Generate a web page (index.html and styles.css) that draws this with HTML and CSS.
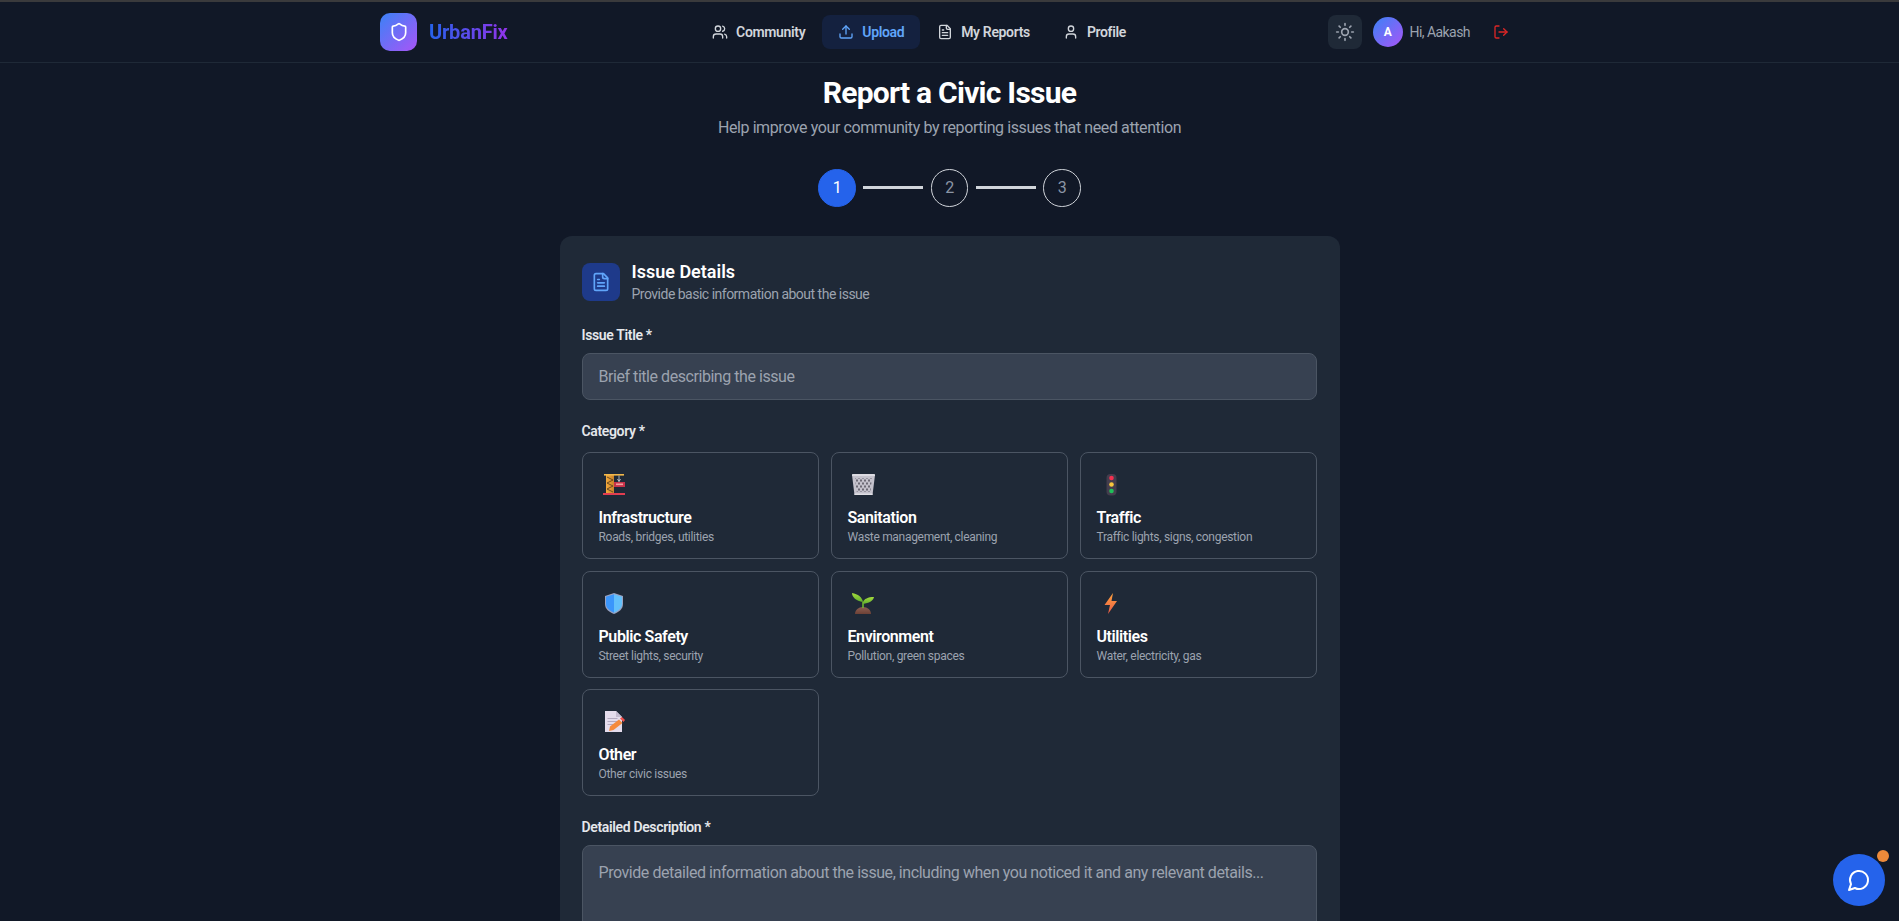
FILE: index.html
```html
<!DOCTYPE html>
<html lang="en">
<head>
  <meta charset="UTF-8" />
  <meta name="viewport" content="width=device-width, initial-scale=1.0" />
  <title>Report a Civic Issue - UrbanFix</title>
  <link rel="stylesheet" href="styles.css">
</head>
<body>
  <svg class="sprite" aria-hidden="true">
    <defs>
      <linearGradient id="crane-metal" x1="0" y1="0" x2="1" y2="0"><stop offset="0" stop-color="#f2a93b"/><stop offset="1" stop-color="#c9822a"/></linearGradient>
      <linearGradient id="bolt-fill" x1="0" y1="0" x2="0" y2="1"><stop offset="0" stop-color="#ffa33d"/><stop offset="1" stop-color="#ea5a47"/></linearGradient>
      <linearGradient id="sprout-leaf" x1="0" y1="0" x2="0" y2="1"><stop offset="0" stop-color="#a6dc3c"/><stop offset="1" stop-color="#5fae2e"/></linearGradient>
      <linearGradient id="soil" x1="0" y1="0" x2="0" y2="1"><stop offset="0" stop-color="#8d5f52"/><stop offset="1" stop-color="#6d4136"/></linearGradient>
      <pattern id="bin-mesh" width="4" height="6" patternUnits="userSpaceOnUse">
        <ellipse cx="1" cy="1.500" rx=".8" ry="1.300" fill="#55525e"/>
        <ellipse cx="3" cy="4.500" rx=".8" ry="1.300" fill="#55525e"/>
      </pattern>
    </defs>
    <symbol id="i-shield" viewBox="0 0 24 24"><path d="M20 13c0 5-3.5 7.5-7.66 8.95a1 1 0 0 1-.67-.01C7.5 20.5 4 18 4 13V6a1 1 0 0 1 1-1c2 0 4.5-1.2 6.24-2.72a1.17 1.17 0 0 1 1.52 0C14.51 3.81 17 5 19 5a1 1 0 0 1 1 1z"/></symbol>
    <symbol id="i-users" viewBox="0 0 24 24"><path d="M16 21v-2a4 4 0 0 0-4-4H6a4 4 0 0 0-4 4v2"/><circle cx="9" cy="7" r="4"/><path d="M22 21v-2a4 4 0 0 0-3-3.87"/><path d="M16 3.13a4 4 0 0 1 0 7.75"/></symbol>
    <symbol id="i-upload" viewBox="0 0 24 24"><path d="M21 15v4a2 2 0 0 1-2 2H5a2 2 0 0 1-2-2v-4"/><polyline points="17 8 12 3 7 8"/><line x1="12" y1="3" x2="12" y2="15"/></symbol>
    <symbol id="i-file" viewBox="0 0 24 24"><path d="M15 2H6a2 2 0 0 0-2 2v16a2 2 0 0 0 2 2h12a2 2 0 0 0 2-2V7Z"/><path d="M14 2v4a2 2 0 0 0 2 2h4"/><path d="M10 9H8"/><path d="M16 13H8"/><path d="M16 17H8"/></symbol>
    <symbol id="i-user" viewBox="0 0 24 24"><path d="M19 21v-2a4 4 0 0 0-4-4H9a4 4 0 0 0-4 4v2"/><circle cx="12" cy="7" r="4"/></symbol>
    <symbol id="i-sun" viewBox="0 0 24 24"><circle cx="12" cy="12" r="4"/><path d="M12 2v2"/><path d="M12 20v2"/><path d="m4.93 4.93 1.41 1.41"/><path d="m17.66 17.66 1.41 1.41"/><path d="M2 12h2"/><path d="M20 12h2"/><path d="m6.34 17.66-1.41 1.41"/><path d="m19.07 4.93-1.41 1.41"/></symbol>
    <symbol id="i-logout" viewBox="0 0 24 24"><path d="M9 21H5a2 2 0 0 1-2-2V5a2 2 0 0 1 2-2h4"/><polyline points="16 17 21 12 16 7"/><line x1="21" y1="12" x2="9" y2="12"/></symbol>
    <symbol id="i-chat" viewBox="0 0 24 24"><path d="M7.9 20A9 9 0 1 0 4 16.1L2 22Z"/></symbol>
  </svg>

  <header class="topbar">
    <div class="topbar-inner">
      <a class="brand" href="#">
        <span class="brand-logo"><svg class="icon icon-20"><use href="#i-shield"/></svg></span>
        <span class="brand-name">UrbanFix</span>
      </a>
      <nav class="nav-links">
        <a class="nav-link" href="#"><svg class="icon"><use href="#i-users"/></svg>Community</a>
        <a class="nav-link active" href="#"><svg class="icon"><use href="#i-upload"/></svg>Upload</a>
        <a class="nav-link" href="#"><svg class="icon"><use href="#i-file"/></svg>My Reports</a>
        <a class="nav-link" href="#"><svg class="icon"><use href="#i-user"/></svg>Profile</a>
      </nav>
      <div class="user-area">
        <button class="theme-btn"><svg class="icon icon-20"><use href="#i-sun"/></svg></button>
        <span class="avatar">A</span>
        <span class="greeting">Hi, Aakash</span>
        <button class="logout-btn"><svg class="icon"><use href="#i-logout"/></svg></button>
      </div>
    </div>
  </header>

  <main class="page">
    <h1 class="page-title">Report a Civic Issue</h1>
    <p class="page-sub">Help improve your community by reporting issues that need attention</p>

    <div class="steps">
      <div class="step current">1</div>
      <div class="step-line"></div>
      <div class="step">2</div>
      <div class="step-line"></div>
      <div class="step">3</div>
    </div>

    <form class="card">
      <div class="card-head">
        <span class="card-icon"><svg class="icon icon-20"><use href="#i-file"/></svg></span>
        <div>
          <h2 class="card-title">Issue Details</h2>
          <p class="card-sub">Provide basic information about the issue</p>
        </div>
      </div>

      <label class="field-label" for="issueTitle">Issue Title *</label>
      <input class="text-input" id="issueTitle" type="text" placeholder="Brief title describing the issue">

      <div class="field-label spaced cat-label">Category *</div>
      <div class="cat-grid">
        <button type="button" class="cat-card">
          <svg class="emoji" viewBox="0 0 30 24">
            <rect x="7" y="2" width="8" height="19" fill="url(#crane-metal)"/>
            <path d="M8 4l6 3-6 3 6 3-6 3 6 3" fill="none" stroke="#6b4a1f" stroke-width="1"/>
            <rect x="5" y="1" width="20" height="1.600" fill="#f2b84b"/>
            <path d="M20 2.500v6" stroke="#aab0b8" stroke-width="1"/>
            <path d="M18.500 6l1.500 2.500L21.500 6" fill="none" stroke="#d8d8de" stroke-width=".8"/>
            <rect x="15" y="9" width="11" height="5" fill="#c8324a"/>
            <rect x="17" y="10.500" width="7" height="1.600" fill="#f0a0a0"/>
            <rect x="4" y="20" width="22" height="2" fill="#e23d50"/>
          </svg>
          <span class="cat-name">Infrastructure</span>
          <span class="cat-desc">Roads, bridges, utilities</span>
        </button>
        <button type="button" class="cat-card">
          <svg class="emoji" viewBox="0 0 30 24">
            <path d="M4 2h23l-2.500 20H6.500z" fill="#c4c2cc"/>
            <path d="M7 5h17l-1.600 14H8.600z" fill="url(#bin-mesh)"/>
            <rect x="4" y="1" width="23" height="2" rx=".6" fill="#dcdbe2"/>
            <rect x="6.500" y="20.500" width="18" height="1.500" fill="#e0dfe5"/>
          </svg>
          <span class="cat-name">Sanitation</span>
          <span class="cat-desc">Waste management, cleaning</span>
        </button>
        <button type="button" class="cat-card">
          <svg class="emoji" viewBox="0 0 30 24">
            <rect x="9.500" y="1" width="10" height="21.500" rx="4" fill="#433d4d"/>
            <circle cx="14.500" cy="5" r="2.300" fill="#f4304f"/>
            <circle cx="14.500" cy="11.500" r="2.300" fill="#f8c63d"/>
            <circle cx="14.500" cy="18" r="2.300" fill="#1fbf5a"/>
          </svg>
          <span class="cat-name">Traffic</span>
          <span class="cat-desc">Traffic lights, signs, congestion</span>
        </button>
        <button type="button" class="cat-card">
          <svg class="emoji" viewBox="0 0 30 24">
            <path d="M15 1l9 3v8c0 5-4 8-9 10-5-2-9-5-9-10V4z" fill="#9aa3c2"/>
            <path d="M15 2.300V20.700c-4-1.800-8-4.400-8-8.700V4.700z" fill="#3b96fb"/>
            <path d="M15 2.300l8 2.400V12c0 4.300-4 6.900-8 8.700z" fill="#63c0fb"/>
          </svg>
          <span class="cat-name">Public Safety</span>
          <span class="cat-desc">Street lights, security</span>
        </button>
        <button type="button" class="cat-card">
          <svg class="emoji" viewBox="0 0 30 24">
            <path d="M7 22c0-4 3.500-7 8-7s8 3 8 7z" fill="url(#soil)"/>
            <path d="M14.200 16V10h1.600v6z" fill="#6fb62f"/>
            <path d="M15 10C14 5 10 2 4 1c0 4 4 8 11 9z" fill="url(#sprout-leaf)"/>
            <path d="M15 10c1-3 5-5 11-5-1 4-5 6-11 7z" fill="url(#sprout-leaf)"/>
          </svg>
          <span class="cat-name">Environment</span>
          <span class="cat-desc">Pollution, green spaces</span>
        </button>
        <button type="button" class="cat-card">
          <svg class="emoji" viewBox="0 0 30 24">
            <path d="M16 1L7.500 13H13l-2 9 9-13h-5.500z" fill="url(#bolt-fill)"/>
          </svg>
          <span class="cat-name">Utilities</span>
          <span class="cat-desc">Water, electricity, gas</span>
        </button>
        <button type="button" class="cat-card">
          <svg class="emoji" viewBox="0 0 30 24">
            <path d="M6 1h11l6 6v15H6z" fill="#e4dcec"/>
            <path d="M17 1l6 6h-6z" fill="#c4bbd0"/>
            <path d="M8.500 8.500h10M8.500 11.500h10M8.500 14.500h6" stroke="#b3a9bf" stroke-width="1"/>
            <path d="M10 21l1-4.500 9-7 3.500 3.500-9 7z" fill="#f58a3c"/>
            <path d="M21 8.500l2-1.500 3 3-1.500 2z" fill="#f2504b"/>
          </svg>
          <span class="cat-name">Other</span>
          <span class="cat-desc">Other civic issues</span>
        </button>
      </div>

      <label class="field-label spaced" for="issueDesc">Detailed Description *</label>
      <textarea class="text-input text-area" id="issueDesc" placeholder="Provide detailed information about the issue, including when you noticed it and any relevant details..."></textarea>
    </form>
  </main>

  <button class="chat-fab">
    <svg class="icon icon-24"><use href="#i-chat"/></svg>
    <span class="chat-dot"></span>
  </button>
</body>
</html>
```

FILE: styles.css
```css
* {
  box-sizing: border-box;
  letter-spacing: -0.025em;
}

html, body {
  height: 100%;
  overflow: hidden;
}

body {
  margin: 0;
  background-color: #111827;
  color: #fff;
  font-family: Roboto, 'Noto Sans', sans-serif;
  border-top: 2px solid #3a3a3c;
}

a {
  color: inherit;
  text-decoration: none;
}

button {
  font-family: inherit;
  border: none;
  background: none;
  color: inherit;
  cursor: pointer;
}

.sprite {
  position: absolute;
  width: 0;
  height: 0;
}

.icon {
  width: 16px;
  height: 16px;
  flex-shrink: 0;
  fill: none;
  stroke: currentColor;
  stroke-width: 2;
  stroke-linecap: round;
  stroke-linejoin: round;
}

.icon-20 { width: 20px; height: 20px; }
.icon-24 { width: 24px; height: 24px; }

/* top bar */
.topbar {
  height: 61px;
  padding-right: 2px;
  border-bottom: 1px solid #1f2937;
}

.topbar-inner {
  width: 1137px;
  height: 100%;
  margin: 0 auto;
  display: flex;
  align-items: center;
  justify-content: space-between;
}

.brand {
  display: flex;
  align-items: center;
  gap: 12px;
}

.brand-logo {
  width: 37px;
  height: 38px;
  border-radius: 10px;
  background: linear-gradient(135deg, #3b82f6, #a855f7);
  display: flex;
  align-items: center;
  justify-content: center;
}

.brand-name {
  font-size: 20px;
  font-weight: 700;
  letter-spacing: -0.01em;
  background: linear-gradient(90deg, #2563eb, #9333ea);
  -webkit-background-clip: text;
  background-clip: text;
  color: transparent;
}

.nav-links {
  display: flex;
  gap: 1px;
  margin-left: 3px;
}

.nav-link {
  display: flex;
  align-items: center;
  gap: 8px;
  height: 34px;
  padding: 0 16px;
  border-radius: 8px;
  font-size: 14px;
  font-weight: 600;
  color: #d1d5db;
}

.nav-link.active {
  background-color: #14213f;
  color: #60a5fa;
}

.user-area {
  display: flex;
  align-items: center;
}

.theme-btn {
  width: 34px;
  height: 34px;
  padding: 0;
  border-radius: 8px;
  background-color: #1f2937;
  color: #9ca3af;
  display: flex;
  align-items: center;
  justify-content: center;
  margin-right: 11px;
}

.avatar {
  width: 30px;
  height: 30px;
  border-radius: 50%;
  background: linear-gradient(135deg, #3b82f6, #a855f7);
  display: flex;
  align-items: center;
  justify-content: center;
  font-size: 12px;
  font-weight: 700;
  margin-right: 7px;
}

.greeting {
  font-size: 14px;
  letter-spacing: -0.04em;
  color: #9ca3af;
  margin-right: 15px;
}

.logout-btn {
  padding: 8px;
  color: #dc2626;
  display: flex;
}

/* page head */
.page {
  text-align: center;
}

.page-title {
  margin: 0;
  padding-top: 12px;
  font-size: 30px;
  line-height: 36px;
  font-weight: 700;
}

.page-sub {
  margin: 5px 0 0;
  font-size: 16px;
  line-height: 24px;
  color: #9ca3af;
}

.steps {
  display: flex;
  align-items: center;
  justify-content: center;
  margin-top: 29px;
}

.step {
  width: 37.5px;
  height: 37.5px;
  border: 1px solid #d1d5db;
  border-radius: 50%;
  display: flex;
  align-items: center;
  justify-content: center;
  font-size: 16px;
  color: #8b95a5;
}

.step.current {
  background-color: #2563eb;
  border-color: #2563eb;
  color: #fff;
}

.step-line {
  width: 60px;
  height: 3px;
  margin: 0 7.5px;
  background-color: #d1d5db;
}

/* form card */
.card {
  width: 780px;
  margin: 29.5px auto 0;
  padding: 24px 23px 24px 22px;
  background-color: #1f2937;
  border-radius: 12px;
  text-align: left;
}

.card-head {
  display: flex;
  align-items: center;
  gap: 12px;
  margin-bottom: 21px;
}

.card-icon {
  width: 38px;
  height: 38px;
  border-radius: 8px;
  background-color: #1e3a8a;
  color: #60a5fa;
  display: flex;
  align-items: center;
  justify-content: center;
}

.card-title {
  margin: 0;
  font-size: 18px;
  line-height: 24px;
  font-weight: 600;
  letter-spacing: 0;
}

.card-sub {
  margin: 0;
  font-size: 14px;
  line-height: 20px;
  letter-spacing: -0.036em;
  color: #9ca3af;
}

.field-label {
  display: block;
  font-size: 14px;
  line-height: 20px;
  font-weight: 600;
  color: #e5e7eb;
  margin-bottom: 8px;
}

.field-label.spaced {
  margin-top: 21px;
}

.field-label.cat-label {
  margin-bottom: 11px;
}

.text-input {
  display: block;
  width: 100%;
  height: 47px;
  padding: 0 16px;
  background-color: #374151;
  border: 1px solid #4b5563;
  border-radius: 8px;
  font-family: inherit;
  font-size: 16px;
  color: #fff;
  outline: none;
}

.text-input::placeholder {
  color: #9ca3af;
  letter-spacing: -0.028em;
}

.text-area {
  height: 140px;
  padding: 17px 16px;
  resize: vertical;
}

.cat-grid {
  display: grid;
  grid-template-columns: repeat(3, 1fr);
  gap: 11.5px 12px;
}

.cat-card {
  display: block;
  height: 107px;
  padding: 20px 16px 14px;
  background: transparent;
  border: 1px solid #4b5563;
  border-radius: 8px;
  text-align: left;
}

.emoji {
  display: block;
  width: 30px;
  height: 24px;
  margin-bottom: 11px;
}

.cat-name {
  display: block;
  font-size: 16px;
  line-height: 20px;
  font-weight: 600;
  color: #fff;
}

.cat-desc {
  display: block;
  font-size: 12px;
  line-height: 16px;
  margin-top: 1px;
  color: #9ca3af;
}

/* chat button */
.chat-fab {
  position: fixed;
  right: 14px;
  bottom: 15px;
  width: 52px;
  height: 52px;
  padding: 0;
  border-radius: 50%;
  background-color: #2563eb;
  color: #fff;
  display: flex;
  align-items: center;
  justify-content: center;
}

.chat-dot {
  position: absolute;
  top: -4px;
  right: -4px;
  width: 12px;
  height: 12px;
  border-radius: 50%;
  background-color: #ee8a3a;
}
```
